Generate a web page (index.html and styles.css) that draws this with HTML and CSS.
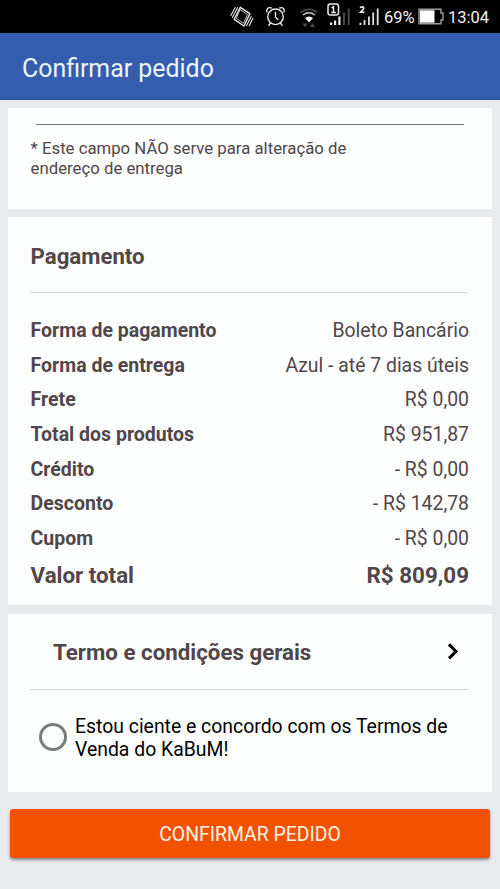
FILE: index.html
```html
<!DOCTYPE html>
<html lang="pt-BR">
<head>
<meta charset="utf-8">
<title>Confirmar pedido</title>
<link rel="stylesheet" href="styles.css">
</head>
<body>
<div class="status">
  <svg class="status-icons" width="160" height="33" viewBox="0 0 160 33" fill="none">
    <g stroke="#e8e8e8" stroke-width="1.4" stroke-linejoin="round" stroke-linecap="round">
      <path d="M20.3 7.3L29.8 13.7L24 26L14.2 19.3Z"/>
      <path d="M20.4 9.8L27.4 14.4L23.5 23.3L16.6 18.6Z" stroke-width=".8"/>
      <path d="M17.6 7.8L12.4 17.6M15.2 7.6L10.9 15.6M31.2 16.4L26.6 25.6M33 18.2L29.2 25.8" stroke-width="1.1"/>
      <circle cx="55.5" cy="16.8" r="7.8"/>
      <path d="M55.5 12.3V17.3L58 19.5M50.5 23L48.8 25.3M60.5 23L62.2 25.3M47 12C45.7 9.3 48.5 6.8 51.2 8M64 12C65.3 9.3 62.5 6.8 59.8 8"/>
    </g>
    <path d="M80.5 12.5C85.5 8.3 92.5 8.3 97.5 12.5" stroke="#444" stroke-width="1.7"/>
    <path d="M83 15C87 12 91 12 95 15" stroke="#ccc" stroke-width="1.5"/>
    <path d="M85 18Q89 14.8 93 18L89 22.5Z" fill="#fff"/>
    <path d="M82.5 23.5h5l-2.5 4zM90 27h5l-2.5-4z" fill="#4b4b4b"/>
    <rect x="108" y="4" width="10.5" height="11" rx="2.3" stroke="#eee" stroke-width="1.5"/>
    <path d="M111.5 8L113.5 6.8V12.5M111.3 12.5H115.8" stroke="#fff" stroke-width="1.4"/>
    <path d="M110 22.5h2.2v2.5H110zM114 20.5h2.2V25H114zM118.3 16.5h2.2V25h-2.2z" fill="#eee"/>
    <path d="M123 12.5h2V25h-2zM127.7 8.5h2V25h-2z" fill="#484848"/>
    <path d="M139.5 22.8h2V25h-2zM143.6 20h1.8v5h-1.8zM148 16.5h1.8V25H148zM152.3 12.5h1.8V25h-1.8zM156.8 8.5h1.8V25h-1.8z" fill="#ddd"/>
    <path d="M140.3 8C140.6 6.5 143.8 6.4 143.8 8.2C143.8 9.5 142 10.4 140.4 12.2H144.3" stroke="#eee" stroke-width="1.6"/>
  </svg>
  <span class="percent">69%</span>
  <svg class="battery" width="26" height="17" viewBox="0 0 26 17">
    <path d="M1 1.2H23V5H25V12H23V15.8H1Z" fill="none" stroke="#9c9c9c" stroke-width="1.4"/>
    <path d="M2 2.3H16.5V14.7H2Z" fill="#fff"/>
  </svg>
  <span class="clock">13:04</span>
</div>
<header class="appbar"><h1>Confirmar pedido</h1></header>
<main>
  <section class="card note">
    <hr class="field-line">
    <p>* Este campo NÃO serve para alteração de<br>endereço de entrega</p>
  </section>
  <section class="card payment">
    <h2>Pagamento</h2>
    <dl>
      <div><dt>Forma de pagamento</dt><dd>Boleto Bancário</dd></div>
      <div><dt>Forma de entrega</dt><dd>Azul - até 7 dias úteis</dd></div>
      <div><dt>Frete</dt><dd>R$ 0,00</dd></div>
      <div><dt>Total dos produtos</dt><dd>R$ 951,87</dd></div>
      <div><dt>Crédito</dt><dd>- R$ 0,00</dd></div>
      <div><dt>Desconto</dt><dd>- R$ 142,78</dd></div>
      <div><dt>Cupom</dt><dd>- R$ 0,00</dd></div>
      <div class="total"><dt>Valor total</dt><dd>R$ 809,09</dd></div>
    </dl>
  </section>
  <section class="card terms">
    <div class="terms-head">
      <h2>Termo e condições gerais</h2>
      <svg width="12" height="18" viewBox="0 0 12 18"><path d="M2 1.4L9 8.4L2 15.4" fill="none" stroke="#000" stroke-width="3"/></svg>
    </div>
    <div class="agree">
      <span class="radio"></span>
      <span>Estou ciente e concordo com os Termos de<br>Venda do KaBuM!</span>
    </div>
  </section>
  <button class="confirm">CONFIRMAR PEDIDO</button>
</main>
</body>
</html>
```
FILE: styles.css
```css
* { box-sizing: border-box; }
body { margin: 0; width: 500px; height: 889px; overflow: hidden; background: #e9eaee; font-family: Roboto, sans-serif; color: #514649; }
h1, h2, p, dl, dt, dd, hr { margin: 0; }
.status { height: 33px; background: #000; display: flex; align-items: center; padding-left: 220px; color: #f2f2f2; white-space: nowrap; }
.status svg { flex: none; display: block; }
.percent { width: 30px; margin-left: 4px; font-size: 16.5px; line-height: 33px; padding-top: 1px; }
.battery { margin-left: 4px; }
.clock { margin-left: 4px; font-size: 16.5px; line-height: 33px; padding-top: 1px; }
.appbar { height: 67px; background: #345dae; padding-left: 22px; display: flex; align-items: center; border-bottom: 1px solid #2d539d; }
h1 { font-size: 24.9px; font-weight: 400; color: #ebf5ff; line-height: 30px; padding-top: 6px; }
main { padding: 8px 8px 0; }
.card { background: #fdfefe; width: 484px; padding: 0 23px 0 22px; }
.note { height: 101px; padding-top: 16px; margin-bottom: 8px; }
.field-line { border: 0; height: 1px; background: #777; margin: 0 5px 0 6px; }
.note p { font-size: 16.75px; line-height: 19.5px; margin-top: 14px; padding-left: .6px; white-space: nowrap; }
.payment { height: 388px; margin-bottom: 9px; }
h2 { font-size: 22.2px; font-weight: 700; line-height: 26px; }
.payment h2 { height: 76px; padding: 26px 0 0 .6px; border-bottom: 1px solid #d5d7d8; }
dl { padding-top: 20px; }
dl div { display: flex; justify-content: space-between; height: 34.7px; align-items: center; font-size: 19.4px; }
dt { font-weight: 700; font-size: 19.5px; padding-left: .6px; }
dl .total { font-size: 22.4px; font-weight: 700; height: 38px; }
.total dt { font-size: 22.3px; }
.terms { height: 178px; }
.terms-head { height: 76px; display: flex; justify-content: space-between; align-items: center; padding: 0 10px 0 23px; border-bottom: 1px solid #d5d7d8; }
.terms-head h2 { font-size: 22.3px; }
.agree { display: flex; align-items: center; gap: 8px; padding: 26px 0 0 9px; color: #000; font-size: 19.4px; line-height: 22.5px; white-space: nowrap; }
.radio { width: 28px; height: 28px; flex: none; margin-bottom: 3px; border: 3px solid #7b7b7b; border-radius: 50%; }
.confirm { display: block; width: 480px; height: 49px; margin: 17px 0 0 2px; border: 0; border-radius: 3px; background: #f25200; color: #fff4e5; font: 400 19.4px Roboto, sans-serif; box-shadow: 0 2px 3px rgba(0,0,0,.4); padding: 2px 0 0; }
```
